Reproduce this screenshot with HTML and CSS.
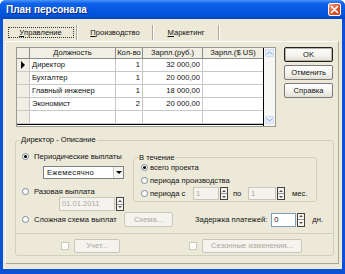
FILE: index.html
```html
<!DOCTYPE html>
<html><head><meta charset="utf-8"><link rel="stylesheet" href="styles.css"></head>
<body>
<div class="win">
  <div class="titlebar">
    <span class="title">План персонала</span>
    <span class="close"><svg width="9" height="9" viewBox="0 0 9 9"><path d="M1.5 1.5L7.5 7.5M7.5 1.5L1.5 7.5" stroke="#fff" stroke-width="1.7" stroke-linecap="round"/></svg></span>
  </div>
  <div class="client">
    <div class="tabs">
      <div class="tab tab1"><span class="focus"><u>У</u>правление</span></div><i class="tsep"></i>
      <div class="tab tab2"><span><u>П</u>роизводство</span></div><i class="tsep"></i>
      <div class="tab tab3"><span><u>М</u>аркетинг</span></div><i class="tsep"></i>
    </div>
    <div class="page">
      <div class="toprow">
        <div class="grid">
          <div class="table">
            <div class="row head"><div class="c ind"></div><div class="c ctr">Должность</div><div class="c ctr">Кол-во</div><div class="c ctr">Зарпл.(руб.)</div><div class="c ctr last">Зарпл.($ US)</div></div>
            <div class="row"><div class="c ind"><span class="tri"></span></div><div class="c">Директор</div><div class="c num">1</div><div class="c num">32 000,00</div><div class="c last"></div></div>
            <div class="row"><div class="c ind"></div><div class="c">Бухгалтер</div><div class="c num">1</div><div class="c num">20 000,00</div><div class="c last"></div></div>
            <div class="row"><div class="c ind"></div><div class="c">Главный инженер</div><div class="c num">1</div><div class="c num">18 000,00</div><div class="c last"></div></div>
            <div class="row"><div class="c ind"></div><div class="c">Экономист</div><div class="c num">2</div><div class="c num">20 000,00</div><div class="c last"></div></div>
            <div class="row"><div class="c ind"></div><div class="c"></div><div class="c num"></div><div class="c num"></div><div class="c last"></div></div>
          </div>
          <div class="vscroll">
            <div class="sbtn"><svg width="7" height="4" viewBox="0 0 7 4"><path d="M0.5 3.5L3.5 0.8L6.5 3.5" fill="none" stroke="#8fa6d0" stroke-width="1"/></svg></div>
            <div class="sbtn"><svg width="7" height="4" viewBox="0 0 7 4"><path d="M0.5 0.5L3.5 3.2L6.5 0.5" fill="none" stroke="#8fa6d0" stroke-width="1"/></svg></div>
          </div>
        </div>
        <div class="btns">
          <div class="btn def">OK</div>
          <div class="btn">Отменить</div>
          <div class="btn">Справка</div>
        </div>
      </div>

      <fieldset class="grp">
        <legend>Директор - Описание</legend>
        <div class="upper">
          <div class="leftcol">
            <div class="rrow r1"><span class="radio on"></span><span>Периодические выплаты</span></div>
            <div class="combo"><span class="ctext">Ежемесячно</span><span class="cbtn"><span class="dtri"></span></span></div>
            <div class="rrow r2"><span class="radio"></span><span>Разовая выплата</span></div>
            <div class="daterow"><span class="edit dis datebox">01.01.2011</span><span class="spin"><span class="sup"></span><span class="sdn"></span></span></div>
          </div>
          <fieldset class="period">
            <legend>В течение</legend>
            <div class="prow p1"><span class="radio on"></span><span>всего проекта</span></div>
            <div class="prow p2"><span class="radio"></span><span>периода производства</span></div>
            <div class="prow p3"><span class="radio"></span><span class="plab">периода с</span><span class="edit dis sbox">1</span><span class="spin"><span class="sup"></span><span class="sdn"></span></span><span class="po">по</span><span class="edit dis sbox2">1</span><span class="spin"><span class="sup"></span><span class="sdn"></span></span><span class="mes">мес.</span></div>
          </fieldset>
        </div>
        <div class="rowb">
          <div class="rrow r3"><span class="radio"></span><span>Сложная схема выплат</span></div>
          <div class="btn dbtn schema">Схема...</div>
          <div class="delay"><span>Задержка платежей:</span><span class="edit dval">0</span><span class="spin"><span class="sup"></span><span class="sdn"></span></span><span class="dn">дн.</span></div>
        </div>
        <div class="hsep"></div>
        <div class="rowc">
          <span class="chk c1"></span><div class="btn dbtn uchet">Учет...</div>
          <span class="chk c2"></span><div class="btn dbtn season">Сезонные изменения...</div>
        </div>
      </fieldset>
    </div>
  </div>
</div>
</body></html>
```
FILE: styles.css
```css
*{box-sizing:border-box}
body{margin:0;background:#fff;font-family:"Liberation Sans",Arial,sans-serif;font-size:7.6px;color:#111;line-height:10px}
.win{width:345px;height:274px;background:#0b52d6;border-radius:6px 6px 0 0;display:flex;flex-direction:column;overflow:hidden}
.titlebar{height:19px;flex:none;display:flex;align-items:center;padding:0 4px 0 6px;background:linear-gradient(#4a94f7,#0f63ea 18%,#0457e2 55%,#0250d8 85%,#0a44bd)}
.title{color:#fff;font-weight:bold;font-size:10px;flex:1;text-shadow:1px 1px #0a2a80}
.close{width:13px;height:13px;border:1px solid #fff;border-radius:2px;background:linear-gradient(135deg,#f39a7b,#e0582e 55%,#c8401c);display:flex;align-items:center;justify-content:center}
.client{flex:1;margin:0 3px 5px 3px;background:#ece9d8;display:flex;flex-direction:column}
.tabs{display:flex;height:17px;margin-top:5px;padding-left:2px;align-items:stretch}
.tab{display:flex;align-items:center;justify-content:center}
.tab1{width:71px}
.tab2{width:74px}
.tab3{width:64px}
.tab1 .focus{width:66px;height:11px;border:1px dotted #333;display:flex;align-items:center;justify-content:center}
.tsep{width:2px;border-left:1px solid #aca899;border-right:1px solid #fff;margin:1px 0}
.page{margin-left:2px;width:334px;height:223px;border:1px solid;border-color:#fff #aca899 #aca899 #fff;display:flex;flex-direction:column}
.toprow{display:flex;margin-top:5px;padding-left:10px}
.grid{display:flex;width:260px;height:80px;border:1px solid #9c9a90;background:#fff}
.table{width:247px;border-right:1px solid #000;display:flex;flex-direction:column}
.row{display:grid;grid-template-columns:13px 86px 27px 60px 60px;height:13px}
.row.head{height:11px}
.c{border-right:1px solid #c8c8c8;border-bottom:1px solid #c8c8c8;padding:0 2px;white-space:nowrap;overflow:hidden;display:flex;align-items:center}
.c.last{border-right:0}
.head .c{background:#f1efe4;border-color:#8c8c8c}
.ind{background:#f1efe4;padding:0;justify-content:center}
.ctr{justify-content:center;padding:0}
.num{justify-content:flex-end}
.tri{width:0;height:0;border-left:4px solid #000;border-top:4px solid transparent;border-bottom:4px solid transparent}
.table .row:last-child{border-bottom:1px solid #000;height:14px}
.vscroll{width:11px;background:#f6f6f2;display:flex;flex-direction:column;justify-content:space-between;padding:1px 0 2px}
.sbtn{height:8px;margin:0 1px;background:#e6edfb;border:1px solid #d2ddf4;border-radius:1px;display:flex;align-items:center;justify-content:center}
.btns{margin-left:8px;display:flex;flex-direction:column;gap:3px}
.btn{width:49px;height:15px;border:1px solid #7a7a7a;border-radius:2px;background:linear-gradient(#fff,#f3f2ec 60%,#e2e0d4);display:flex;align-items:center;justify-content:center;white-space:nowrap}
.btn.def{border-color:#222;box-shadow:inset 0 0 0 1px #b5b3a8}
.dbtn{color:#aca899;border-color:#c9c7ba;background:#f4f3ee}
.grp{margin:8px 0 0 9px;width:319px;border:1px solid #d0d0bf;border-radius:3px;padding:0 0 2px 0;min-inline-size:0}
.grp>legend{padding:0 1px;margin-left:4px;line-height:10px}
.upper{display:flex}
.leftcol{width:117px;display:flex;flex-direction:column}
.rrow{display:flex;align-items:center;height:11px;white-space:nowrap}
.radio{width:7px;height:7px;border-radius:50%;border:1px solid #7a8a99;background:#fff;flex:none;display:flex;align-items:center;justify-content:center}
.radio.on::after{content:"";width:3px;height:3px;border-radius:50%;background:#000}
.rrow .radio{margin-left:6px;margin-right:5px}
.r1{margin-top:6px}
.combo{margin:4px 0 0 27px;width:81px;height:13px;border:1px solid #7f7f7f;background:#fff;display:flex;align-items:center}
.ctext{flex:1;padding-left:3px;letter-spacing:0.3px}
.cbtn{width:10px;height:11px;border-left:1px solid #c8c8c8;background:#f4f3ee;display:flex;align-items:center;justify-content:center}
.dtri{width:0;height:0;border-top:3px solid #000;border-left:3px solid transparent;border-right:3px solid transparent}
.r2{margin-top:7px}
.daterow{display:flex;margin-left:43px;height:14px;align-items:stretch}
.edit{border:1px solid #7f9db9;background:#fff;padding-left:2px;display:flex;align-items:center}
.edit.dis{color:#aca899;border-color:#c9c7ba;background:#f4f3ee}
.datebox{width:56px}
.spin{width:8px;margin-left:1px;border:1px solid #444;display:flex;flex-direction:column;background:#f4f3ee}
.sup,.sdn{flex:1;display:flex;align-items:center;justify-content:center}
.sup{border-bottom:1px solid #999}
.sup::after{content:"";border-bottom:2px solid #555;border-left:2px solid transparent;border-right:2px solid transparent}
.sdn::after{content:"";border-top:2px solid #555;border-left:2px solid transparent;border-right:2px solid transparent}
.period{margin:8px 0 0 0;width:184px;border:1px solid #d0d0bf;border-radius:3px;padding:0 0 1px 0;min-inline-size:0;align-self:flex-start}
.period>legend{padding:0 1px;margin-left:4px;line-height:9px}
.prow{display:flex;align-items:center;height:11px;white-space:nowrap}
.prow .radio{margin-left:7px;margin-right:2px}
.p2{margin-top:2px}
.p3{height:13px;margin-top:1px;align-items:stretch}
.p3 .radio{align-self:center}
.p3 .plab{width:43px;display:flex;align-items:center}
.sbox{width:26px}
.sbox2{width:28px}
.po{width:15px;margin-left:5px;display:flex;align-items:center}
.mes{margin-left:7px;display:flex;align-items:center}
.rowb{display:flex;align-items:center;height:15px;margin-top:1px}
.r3{width:108px}
.schema{width:49px;height:15px}
.delay{margin-left:auto;margin-right:10px;display:flex;align-items:center;height:14px}
.dval{width:25px;height:14px;margin-left:4px}
.delay .spin{height:14px}
.dn{margin-left:7px}
.hsep{margin-top:6px;height:1px;background:#d0d0bf}
.rowc{display:flex;align-items:center;height:14px;margin-top:5px}
.chk{width:8px;height:8px;border:1px solid #c9c7ba;background:#fff;flex:none}
.c1{margin-left:45px}
.uchet{width:46px;height:14px;margin-left:5px}
.c2{margin-left:69px}
.season{width:100px;height:14px;margin-left:5px}
```
